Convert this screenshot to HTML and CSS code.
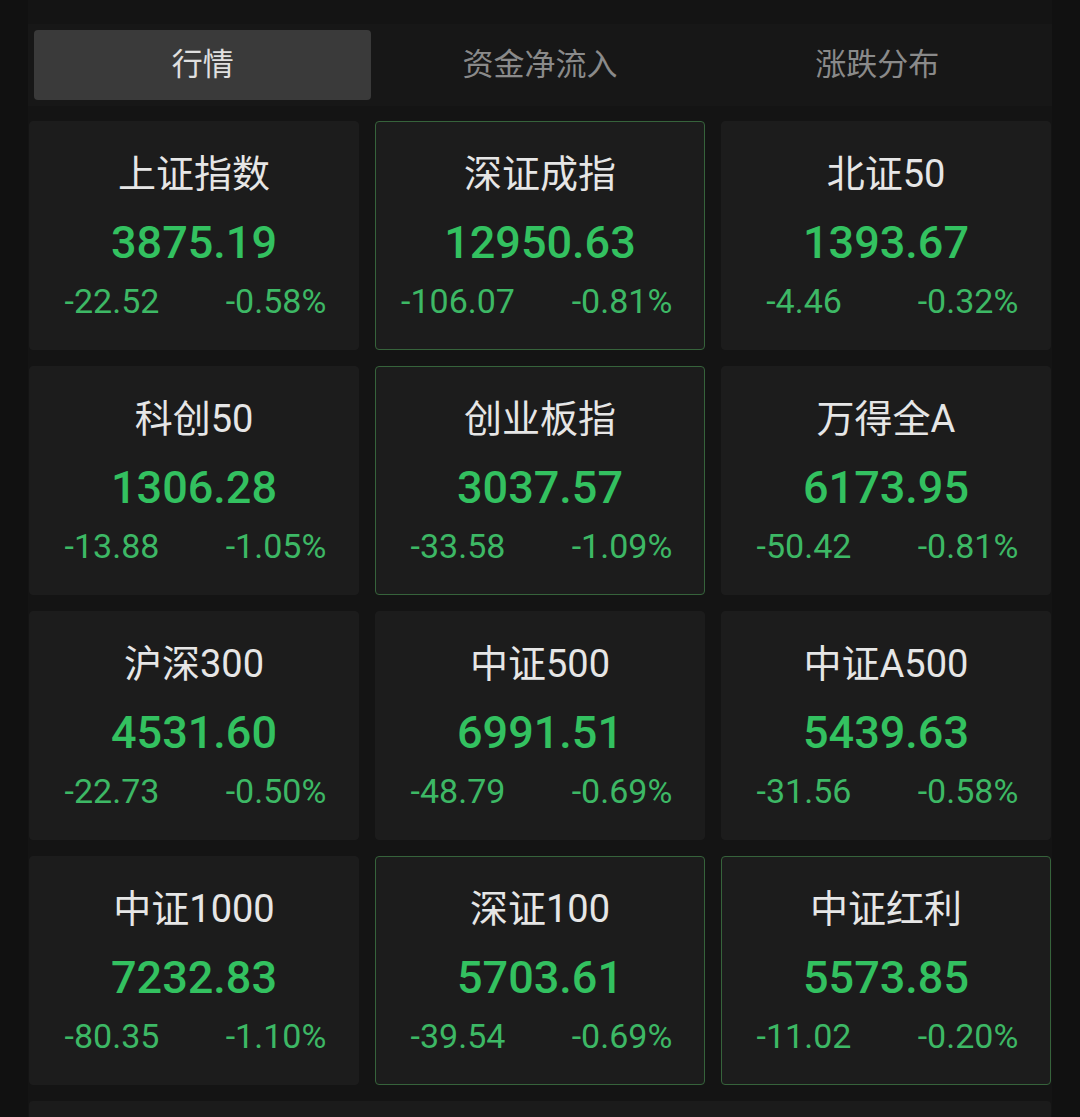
FILE: index.html
```html
<!DOCTYPE html>
<html lang="zh-CN">
<head>
	<meta charset="UTF-8">
	<title>行情</title>
	<link rel="stylesheet" href="styles.css">
</head>
<body>
	<div class="wrap">
		<ul class="tabs">
			<li class="tab cur">行情</li>
			<li class="tab">资金净流入</li>
			<li class="tab">涨跌分布</li>
		</ul>

		<div class="grid">
			<div class="card">
				<div class="name">上证指数</div>
				<div class="price">3875.19</div>
				<div class="chg"><span>-22.52</span><span>-0.58%</span></div>
			</div>
			<div class="card hl">
				<div class="name">深证成指</div>
				<div class="price">12950.63</div>
				<div class="chg"><span>-106.07</span><span>-0.81%</span></div>
			</div>
			<div class="card">
				<div class="name">北证50</div>
				<div class="price">1393.67</div>
				<div class="chg"><span>-4.46</span><span>-0.32%</span></div>
			</div>

			<div class="card">
				<div class="name">科创50</div>
				<div class="price">1306.28</div>
				<div class="chg"><span>-13.88</span><span>-1.05%</span></div>
			</div>
			<div class="card hl">
				<div class="name">创业板指</div>
				<div class="price">3037.57</div>
				<div class="chg"><span>-33.58</span><span>-1.09%</span></div>
			</div>
			<div class="card">
				<div class="name">万得全A</div>
				<div class="price">6173.95</div>
				<div class="chg"><span>-50.42</span><span>-0.81%</span></div>
			</div>

			<div class="card">
				<div class="name">沪深300</div>
				<div class="price">4531.60</div>
				<div class="chg"><span>-22.73</span><span>-0.50%</span></div>
			</div>
			<div class="card">
				<div class="name">中证500</div>
				<div class="price">6991.51</div>
				<div class="chg"><span>-48.79</span><span>-0.69%</span></div>
			</div>
			<div class="card">
				<div class="name">中证A500</div>
				<div class="price">5439.63</div>
				<div class="chg"><span>-31.56</span><span>-0.58%</span></div>
			</div>

			<div class="card">
				<div class="name">中证1000</div>
				<div class="price">7232.83</div>
				<div class="chg"><span>-80.35</span><span>-1.10%</span></div>
			</div>
			<div class="card hl">
				<div class="name">深证100</div>
				<div class="price">5703.61</div>
				<div class="chg"><span>-39.54</span><span>-0.69%</span></div>
			</div>
			<div class="card hl">
				<div class="name">中证红利</div>
				<div class="price">5573.85</div>
				<div class="chg"><span>-11.02</span><span>-0.20%</span></div>
			</div>
		</div>

		<div class="more"></div>
	</div>
</body>
</html>
```

FILE: styles.css
```css
body, ul, li{
	margin: 0;
	padding: 0;
}
ul, li{
	list-style: none;
}
body{
	background-color: #111;
	font-family: "Roboto", "Noto Sans CJK SC", sans-serif;
	color: #e4e4e4;
	overflow: hidden;
}
.wrap{
	width: 1024px;
	margin-left: 28px;
	padding-top: 24px;
	background-color: #141414;
}
/* 顶部切换 */
.tabs{
	display: grid;
	grid-template-columns: repeat(3, 1fr);
	height: 70px;
	padding: 6px;
	background-color: #171717;
}
.tab{
	line-height: 70px;
	text-align: center;
	font-size: 31px;
	color: #8a8a8a;
	border-radius: 4px;
}
.tab.cur{
	color: #e0e0e0;
	background-color: #3a3a3a;
}
/* 指数卡片 */
.grid{
	display: grid;
	grid-template-columns: repeat(3, 330px);
	grid-auto-rows: 229px;
	gap: 16px;
	padding: 15px 1px 0;
}
.card{
	box-sizing: border-box;
	padding-top: 27px;
	text-align: center;
	background-color: #1c1c1c;
	border: 1px solid #1c1c1c;
	border-radius: 4px;
}
.card.hl{
	border-color: #36633b;
}
.name{
	height: 50px;
	line-height: 50px;
	font-size: 38px;
	color: #e6e6e6;
}
.price{
	height: 56px;
	margin-top: 16px;
	line-height: 56px;
	font-size: 45px;
	font-weight: 500;
	color: #33c160;
}
.chg{
	display: grid;
	grid-template-columns: 1fr 1fr;
	height: 40px;
	margin-top: 10px;
	line-height: 40px;
	font-size: 34px;
	color: #3db865;
}
.more{
	height: 100px;
	margin: 16px 1px 0;
	background-color: #1b1b1b;
	border-radius: 4px;
}
```
